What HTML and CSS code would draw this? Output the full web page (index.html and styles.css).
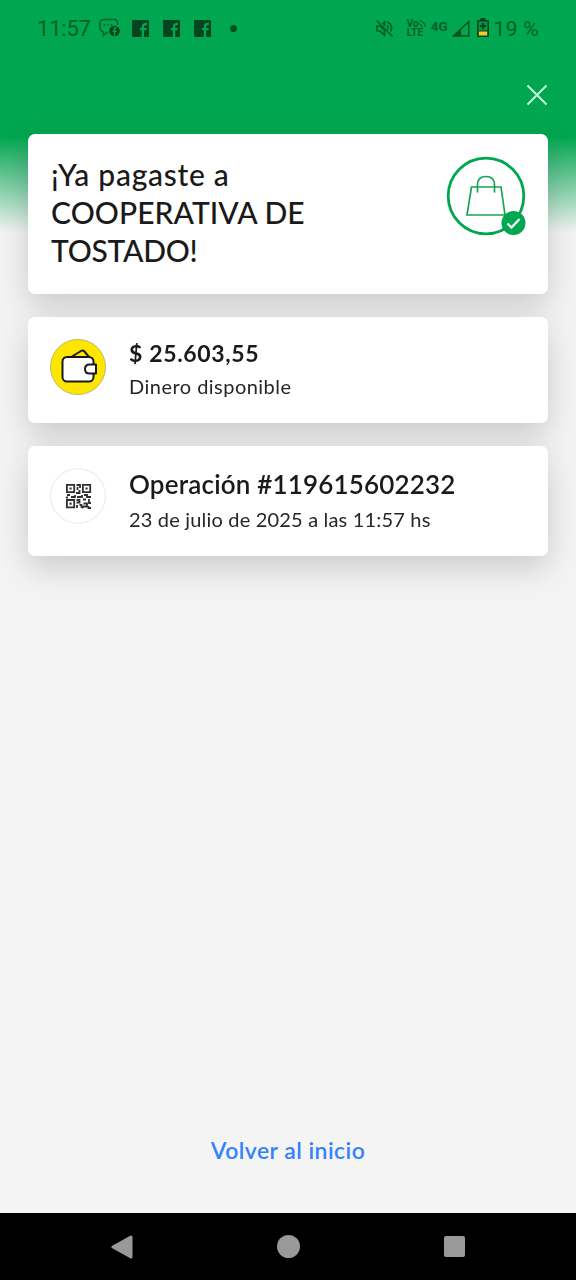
FILE: index.html
```html
<!DOCTYPE html>
<html lang="es">
<head>
  <meta charset="UTF-8" />
  <meta name="viewport" content="width=device-width, initial-scale=1.0"/>
  <title>Comprobante de pago</title>
  <link rel="stylesheet" href="styles.css">
</head>
<body>
  <div class="screen">
    <div class="status-bar">
      <span class="clock">11:57</span>
      <svg class="icon-chat" width="22" height="20" viewBox="0 0 22 20">
        <path d="M5 1.500h10q3.500 0 3.500 3.500v2M9 14.500H7.500L4.500 17.500V14Q1 13 1 9.500V5Q1 1.500 5 1.500" fill="none" stroke="#03602a" stroke-width="1.400"/>
        <circle cx="5.500" cy="7" r=".9" fill="#03602a"/><circle cx="9" cy="7" r=".9" fill="#03602a"/><circle cx="12.500" cy="7" r=".9" fill="#03602a"/>
        <circle cx="15.500" cy="13" r="5.300" fill="#03451f"/>
        <path d="M15.500 18v-7q0-1.500 2-1.300M13.500 13.200h4" fill="none" stroke="#00a650" stroke-width="1.400"/>
      </svg>
      <svg class="icon-fb" width="17" height="17" viewBox="0 0 17 17">
        <rect width="17" height="17" rx="1" fill="#03451f"/>
        <path d="M11 17V6.500q0-2.800 4-2.500M8 9.200h6.500" fill="none" stroke="#00a650" stroke-width="2.300"/>
      </svg>
      <svg class="icon-fb" width="17" height="17" viewBox="0 0 17 17">
        <rect width="17" height="17" rx="1" fill="#03451f"/>
        <path d="M11 17V6.500q0-2.800 4-2.500M8 9.200h6.500" fill="none" stroke="#00a650" stroke-width="2.300"/>
      </svg>
      <svg class="icon-fb" width="17" height="17" viewBox="0 0 17 17">
        <rect width="17" height="17" rx="1" fill="#03451f"/>
        <path d="M11 17V6.500q0-2.800 4-2.500M8 9.200h6.500" fill="none" stroke="#00a650" stroke-width="2.300"/>
      </svg>
      <span class="dot"></span>

      <div class="status-right">
        <svg width="19" height="19" viewBox="0 0 19 19" fill="none" stroke="#03602a" stroke-width="1.700">
          <path d="M1.500 1.500l16 16"/>
          <path d="M2 7v5h3l4.500 4V11L5 7z"/>
          <path d="M7.500 5l2-2v4M12 6.500q1.500 1.500 1 4M12 2.500q6 3 4 10"/>
        </svg>
        <div class="volte">
          <span>Vo</span>
          <svg width="9" height="9" viewBox="0 0 9 9" fill="none" stroke="#03602a" stroke-width="1.100">
            <path d="M.5 4.500q3 .5 3.500 4M1.500 1.500q5 1 6 6.500"/>
          </svg>
          <span class="lte">LTE</span>
        </div>
        <span class="net">4G</span>
        <svg class="icon-signal" width="18" height="17" viewBox="0 0 18 17">
          <path d="M1.500 16L16.700 1.500V16z" fill="none" stroke="#03521f" stroke-width="1.400"/>
          <path d="M1 16.500l8-8v8z" fill="#03521f"/>
        </svg>
        <svg class="icon-battery" width="12" height="19" viewBox="0 0 12 19">
          <path d="M3.500 0h5v2H11q1 0 1 1v15q0 1-1 1H1q-1 0-1-1V3q0-1 1-1h2.500z" fill="#03451f"/>
          <path d="M1.500 3.500h9v9h-9z" fill="#079245"/>
          <path d="M6 5v6M3 8h6" stroke="#03451f" stroke-width="2"/>
          <path d="M1.800 13.500h8.400v4H1.800z" fill="#f5c92b"/>
        </svg>
        <span class="percent">19 %</span>
      </div>
    </div>

    <div class="close-row">
      <svg width="22" height="22" viewBox="0 0 22 22">
        <path d="M1.500 1.500l19 19M20.500 1.500l-19 19" stroke="#c5f3d6" stroke-width="2"/>
      </svg>
    </div>

    <div class="cards">
      <div class="card card-title">
        <h1>
          <span class="line line-1">¡Ya pagaste a</span>
          <span class="line line-2">COOPERATIVA DE</span>
          <span class="line line-3">TOSTADO!</span>
        </h1>
        <svg class="bag" width="80" height="80" viewBox="0 0 80 80">
          <circle cx="40" cy="40" r="37.800" fill="#fff" stroke="#00a650" stroke-width="2.800"/>
          <path d="M25.500 31h29.500l4 28H21z" fill="none" stroke="#17a457" stroke-width="1.700"/>
          <path d="M31.500 36.500V29q0-8.500 8.500-8.500t8.500 8.500v7.500" fill="none" stroke="#17a457" stroke-width="1.700"/>
          <circle cx="67.500" cy="67" r="12" fill="#00a650"/>
          <path d="M61.500 67.500l4 4 8-8.500" fill="none" stroke="#e8fff2" stroke-width="2.400"/>
        </svg>
      </div>

      <div class="card card-money">
        <svg width="56" height="56" viewBox="0 0 56 56">
          <circle cx="28" cy="28" r="27.500" fill="#ffe600" stroke="#bdb76a"/>
          <g stroke="#1a1a1a" stroke-width="2" stroke-linejoin="round">
            <path d="M22 17.500l9-5.500q2-1.200 3.500.5l4.500 5.500" fill="#ffe600"/>
            <rect x="12.500" y="18" width="31" height="24.500" rx="4.500" fill="#fff"/>
            <path d="M46 25.500H39.500q-4.500 0-4.500 4.500t4.500 4.500h6.500z" fill="#fff"/>
          </g>
        </svg>
        <div class="info">
          <p class="amount">$ 25.603,55</p>
          <p class="detail">Dinero disponible</p>
        </div>
      </div>

      <div class="card card-operation">
        <svg width="56" height="56" viewBox="0 0 56 56">
          <circle cx="28" cy="28" r="27.400" fill="#fff" stroke="#ededed" stroke-width="1.200"/>
          <g fill="none" stroke="#303030" stroke-width="1.800">
            <path d="M16.900 16.900h7.300v7.300h-7.300zM32.900 16.900h7.300v7.300h-7.300zM16.900 32h7.300v7.300h-7.300z"/>
            <path d="M26.500 17h3M30 16v4M27.500 19v3M26 25h3.500v-3M17 27h3M21 29h4v-2M16 29.500h2M27 29h5v-2M34 27h3v2h4M26.500 32h3v2.500h-3M27 37v3M29.500 37h2v3M33 31.500h3M39 31v4h2M33.500 35.500h3.500v3h-4M38.500 38v2h2.500M32 40l2-2"/>
          </g>
          <path d="M19.500 19.500h2.100v2.100h-2.100zM35.500 19.500h2.100v2.100h-2.100zM19.500 34.600h2.100v2.100h-2.100z" fill="#303030"/>
        </svg>
        <div class="info">
          <p class="operation">Operación #119615602232</p>
          <p class="detail date">23 de julio de 2025 a las 11:57 hs</p>
        </div>
      </div>
    </div>

    <a class="back-link">Volver al inicio</a>

    <div class="nav-bar">
      <svg width="22" height="24" viewBox="0 0 22 24">
        <path d="M2 12L20 2v20z" fill="#999" stroke="#999" stroke-width="3" stroke-linejoin="round"/>
      </svg>
      <span class="nav-home"></span>
      <span class="nav-recent"></span>
    </div>
  </div>
</body>
</html>
```
FILE: styles.css
```css
* {
  box-sizing: border-box;
  margin: 0;
  padding: 0;
}

body {
  font-family: Lato, sans-serif;
  background-color: #f4f4f4;
  color: #1a1a1a;
}

svg {
  display: block;
  flex-shrink: 0;
}

.screen {
  display: flex;
  flex-direction: column;
  width: 576px;
  height: 1280px;
  overflow: hidden;
  background: linear-gradient(#00a650 0, #00a650 136px, #f4f4f4 233px);
}

.status-bar {
  display: flex;
  align-items: center;
  height: 56px;
  padding: 0 37px;
  font-family: Roboto, sans-serif;
  color: #03602a;
}

.clock {
  width: 62px;
  font-size: 22px;
  letter-spacing: -0.2px;
  white-space: nowrap;
}

.icon-chat {
  margin-right: 11px;
}

.icon-fb {
  margin-right: 14px;
}

.dot {
  width: 7px;
  height: 7px;
  margin-left: 5px;
  border-radius: 50%;
  background: #03521f;
}

.status-right {
  display: flex;
  align-items: center;
  margin-left: auto;
}

.volte {
  display: flex;
  flex-wrap: wrap;
  width: 20px;
  margin-left: 13px;
  font-size: 10px;
  font-weight: 700;
  line-height: 9px;
}

.volte svg {
  margin-left: -1px;
}

.lte {
  letter-spacing: 0.2px;
}

.net {
  margin: -4px 4px 0 4px;
  font-size: 13.5px;
  font-weight: 700;
}

.icon-battery {
  margin: -1px 5px 0 7px;
}

.percent {
  margin-top: 1px;
  font-size: 21px;
  letter-spacing: 0.3px;
  white-space: nowrap;
}

.close-row {
  display: flex;
  justify-content: flex-end;
  height: 78px;
  padding: 28px 28px 0;
}

.cards {
  display: flex;
  flex-direction: column;
  gap: 23px;
  margin: 0 28px;
  filter: drop-shadow(0 12px 16px rgba(0, 0, 0, 0.17));
}

.card {
  display: flex;
  padding: 22px;
  border-radius: 7px;
  background: #fff;
}

.card-title {
  justify-content: space-between;
  height: 160px;
  padding: 21px 22px 22px 23px;
}

.card-money {
  height: 106px;
}

.card-operation {
  height: 110px;
}

h1 {
  font-size: 30px;
  font-weight: 500;
  line-height: 38px;
}

.line {
  display: block;
  white-space: nowrap;
}

.line-1 {
  letter-spacing: 0.72px;
}

.line-2 {
  letter-spacing: 0.07px;
}

.line-3 {
  letter-spacing: -0.25px;
}

.bag {
  margin-top: 1px;
}

.info {
  margin-top: -1px;
  margin-left: 23px;
  white-space: nowrap;
}

.amount {
  font-size: 23px;
  font-weight: 700;
  line-height: 30px;
  letter-spacing: 0.65px;
}

.detail {
  margin-top: 5px;
  font-size: 20px;
  line-height: 26px;
  letter-spacing: 0.47px;
  color: #262626;
}

.date {
  letter-spacing: 0.18px;
}

.operation {
  font-size: 26px;
  font-weight: 600;
  line-height: 34px;
  letter-spacing: 0.17px;
}

.back-link {
  align-self: center;
  margin-top: auto;
  margin-bottom: 48px;
  font-size: 23px;
  font-weight: 600;
  line-height: 30px;
  letter-spacing: 0.45px;
  color: #3483fa;
}

.nav-bar {
  display: flex;
  align-items: center;
  justify-content: space-between;
  height: 67px;
  padding: 0 111px;
  background: #000;
}

.nav-home {
  width: 23px;
  height: 23px;
  border-radius: 50%;
  background: #999;
}

.nav-recent {
  width: 21px;
  height: 21px;
  border-radius: 2px;
  background: #999;
}
```
